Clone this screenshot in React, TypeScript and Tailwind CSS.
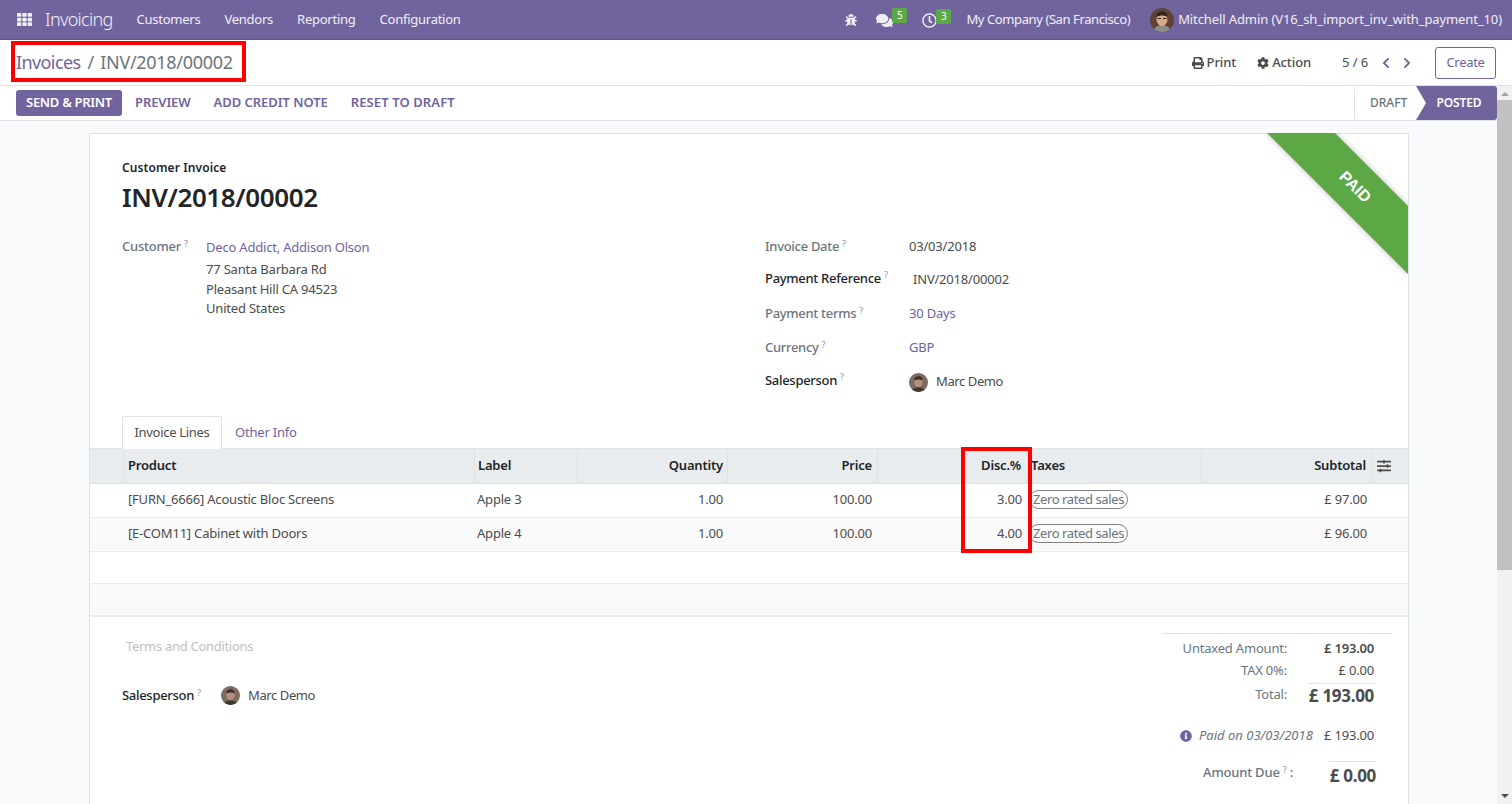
import { FaBug, FaChevronLeft, FaChevronRight, FaCog, FaComments, FaInfoCircle, FaPrint, FaRegClock, FaSlidersH, FaTh } from "react-icons/fa";

const gridCols = "grid grid-cols-[34px_350px_103px_150px_150px_150px_174px_170px_1fr]";

const navLinks = ["Customers", "Vendors", "Reporting", "Configuration"];

const lines = [
  { product: "[FURN_6666] Acoustic Bloc Screens", label: "Apple 3", disc: "3.00", subtotal: "£ 97.00", alt: false },
  { product: "[E-COM11] Cabinet with Doors", label: "Apple 4", disc: "4.00", subtotal: "£ 96.00", alt: true },
];

function Help() {
  return <sup className="ml-[3px] text-[9px] text-[#71639e]/70">?</sup>;
}

function MitchellAvatar() {
  return (
    <svg viewBox="0 0 24 24" className="size-6 rounded-full">
      <rect width="24" height="24" fill="#5e4436" />
      <path d="M3 24c1-5 5-7 9-7s8 2 9 7z" fill="#8d9088" />
      <ellipse cx="12" cy="11.500" rx="5.500" ry="6.500" fill="#d9a98a" />
      <path d="M6.500 9c0-4 3-5.500 5.500-5.500S17.500 5 17.500 9c-3-2-8-2-11 0z" fill="#2f221a" />
      <path d="M7.500 10.500h3.500M13 10.500h3.500" stroke="#2b211c" strokeWidth="1.200" />
    </svg>
  );
}

function MarcAvatar({ className }: { className: string }) {
  return (
    <svg viewBox="0 0 20 20" className={`${className} rounded-full`}>
      <rect width="20" height="20" fill="#7d6a60" />
      <path d="M3 20c1-4 4-5 7-5s6 1 7 5z" fill="#3f3733" />
      <ellipse cx="10" cy="9.500" rx="4.500" ry="5.500" fill="#b58f7a" />
      <path d="M5.500 8c0-3 2-4.500 4.500-4.500S14.500 5 14.500 8c-3-1.500-6-1.500-9 0z" fill="#3b2e28" />
    </svg>
  );
}

function Badge({ n, left }: { n: string; left: string }) {
  return (
    <span className={`absolute -top-[4px] ${left} flex h-[15px] w-[15px] items-center justify-center rounded-[2px] bg-[#5ba848] text-[10px] text-white`}>
      {n}
    </span>
  );
}

function Navbar() {
  return (
    <header className="flex h-10 shrink-0 items-center border-b border-[#5f5387] bg-[#71639e] text-[13px] text-white/90">
      <FaTh className="ml-[17px] size-[15px] text-white/90" />
      <span className="ml-[13px] text-[18px] font-light tracking-[-0.7px] text-white/90">Invoicing</span>
      <nav className="ml-[24px] flex gap-[24px]">
        {navLinks.map((l) => (
          <span key={l} className="tracking-[-0.25px]">
            {l}
          </span>
        ))}
      </nav>
      <div className="ml-auto flex items-center pr-[10px]">
        <FaBug className="size-[12px]" />
        <span className="relative ml-[19px] mt-[1px] w-[36px]">
          <FaComments className="size-[17px]" />
          <Badge n="5" left="left-[16px]" />
        </span>
        <span className="relative ml-[10px] mt-[1px] w-[44px]">
          <FaRegClock className="size-[15px]" />
          <Badge n="3" left="left-[14px]" />
        </span>
        <span className="tracking-[-0.4px]">My Company (San Francisco)</span>
        <span className="ml-[20px]">
          <MitchellAvatar />
        </span>
        <span className="ml-[4px] tracking-[-0.1px]">Mitchell Admin (V16_sh_import_inv_with_payment_10)</span>
      </div>
    </header>
  );
}

function ControlPanel() {
  return (
    <div className="flex h-[46px] shrink-0 items-center border-b border-[#dee2e6] bg-white pl-[16px] pr-[16px]">
      <span className="text-[18px] tracking-[-0.6px] text-[#71639e]">Invoices</span>
      <span className="ml-[7px] mr-[6px] text-[18px] text-[#6b7280]">/</span>
      <span className="text-[18px] tracking-[-0.3px] text-[#6c757d]">INV/2018/00002</span>
      <div className="ml-auto flex items-center text-[13px] text-[#4c4c4c]">
        <FaPrint className="size-[12px]" />
        <span className="ml-[3px] font-medium tracking-[-0.1px]">Print</span>
        <FaCog className="ml-[21px] size-[12px]" />
        <span className="ml-[3px] font-medium tracking-[-0.1px]">Action</span>
        <span className="ml-[31px] tracking-[-0.1px]">5 / 6</span>
        <FaChevronLeft className="ml-[12px] size-[12px] text-[#71639e]" />
        <FaChevronRight className="ml-[9px] size-[12px] text-[#71639e]" />
        <span className="ml-[22px] flex h-[32px] w-[61px] items-center justify-center rounded-[3px] border border-[#71639e] tracking-[-0.3px] text-[#71639e]">
          Create
        </span>
      </div>
    </div>
  );
}

function ActionBar() {
  return (
    <div className="flex h-[35px] shrink-0 items-center border-b border-[#dee2e6] bg-white pl-[16px] text-[13px] font-semibold tracking-[-0.1px] text-[#71639e]">
      <span className="flex h-[26px] w-[106px] items-center justify-center rounded-[3px] bg-[#71639e] tracking-[-0.3px] text-white">SEND &amp; PRINT</span>
      <span className="ml-[13px]">PREVIEW</span>
      <span className="ml-[23px] tracking-[-0.05px]">ADD CREDIT NOTE</span>
      <span className="ml-[23px] tracking-[0.1px]">RESET TO DRAFT</span>
      <div className="ml-auto flex h-full items-center self-stretch">
        <span className="flex h-full w-[62px] items-center rounded-l-[3px] border-l border-[#dee2e6] pl-[15px] text-[12px] font-medium tracking-normal text-[#6c757d]">DRAFT</span>
        <span className="flex h-full w-[81px] items-center justify-center rounded-r-[3px] bg-[#71639e] pl-[5px] text-[12px] font-semibold tracking-[-0.1px] text-white [clip-path:polygon(0_0,100%_0,100%_100%,0_100%,10px_50%)]">
          POSTED
        </span>
      </div>
    </div>
  );
}

function FieldRow({ label, strong, children, h }: { label: string; strong?: boolean; children: React.ReactNode; h: string }) {
  return (
    <div className={`flex items-center ${h}`}>
      <span className={`w-[144px] shrink-0 tracking-[-0.3px] ${strong ? "mb-[3px] font-medium text-[#212529]" : "font-medium text-[#6c757d]"}`}>
        {label}
        <Help />
      </span>
      {children}
    </div>
  );
}

function Ribbon() {
  return (
    <div className="absolute right-0 top-[-1px] size-[141px] overflow-hidden">
      <div className="absolute left-[-37.500px] top-[29.500px] flex h-[48px] w-[250px] rotate-45 items-center justify-center bg-[#5ca845] font-['Liberation_Sans',sans-serif] text-[16px] font-bold tracking-normal text-white shadow-[0_0_6px_rgba(0,0,0,0.25)]">
        PAID
      </div>
    </div>
  );
}

function InvoiceTable() {
  const head = "flex items-center border-l border-[#dee2e6] font-semibold text-[#212529]";
  return (
    <div>
      <div className={`${gridCols} h-[36px] border-y border-[#dee2e6] bg-[#e9ecef] text-[13px]`}>
        <div />
        <div className={`${head} pl-[3px]`}>Product</div>
        <div className={`${head} pl-[3px]`}>Label</div>
        <div className={`${head} justify-end pr-[4px]`}>Quantity</div>
        <div className={`${head} justify-end pr-[5px]`}>Price</div>
        <div className={`${head} justify-end pr-[6px]`}>Disc.%</div>
        <div className={`${head} pl-[3px]`}>Taxes</div>
        <div className={`${head} justify-end pr-[5px]`}>Subtotal</div>
        <div className={`${head} pl-[5px]`}>
          <FaSlidersH className="size-[14px] text-[#4c4c4c]" />
        </div>
      </div>
      {lines.map((l) => (
        <div key={l.label} className={`${gridCols} h-[34px] items-center border-b border-[#e9ecef] pb-[2px] text-[#4c4c4c] ${l.alt ? "bg-[#fafafa]" : "bg-white"}`}>
          <div />
          <div className="pl-[4px]">{l.product}</div>
          <div className="pl-[3px]">{l.label}</div>
          <div className="pr-[4px] text-right">1.00</div>
          <div className="pr-[5px] text-right">100.00</div>
          <div className="pr-[5px] text-right">{l.disc}</div>
          <div className="pl-[2px]">
            <span className="inline-flex h-[19px] items-center rounded-full border border-[#808080] px-[3px] text-[13px] tracking-[-0.4px] text-[#6c757d]">Zero rated sales</span>
          </div>
          <div className="pr-[4px] text-right">{l.subtotal}</div>
          <div />
        </div>
      ))}
      <div className="h-[32px] border-b border-[#e9ecef] bg-white" />
      <div className="h-[33px] border-b-2 border-[#e9ecef] bg-[#fafafa]" />
    </div>
  );
}

function Totals() {
  return (
    <div className="mr-[16px] mt-[16px] w-[229px] border-t border-[#dee2e6] text-[#4c4c4c]">
      <div className="flex h-[30px] items-center pr-[18px]">
        <span className="w-[124px] text-right text-[#6c757d]">Untaxed Amount:</span>
        <span className="ml-auto font-semibold">£ 193.00</span>
      </div>
      <div className="flex h-[14px] items-center pr-[18px]">
        <span className="w-[124px] text-right text-[#6c757d]">TAX 0%:</span>
        <span className="ml-auto">£ 0.00</span>
      </div>
      <div className="flex pr-[17px]">
        <span className="mt-[6px] w-[124px] text-right leading-[20px] text-[#6c757d]">Total:</span>
        <span className="ml-auto mt-[5px] w-[67px] border-t border-[#dee2e6] pt-[1px] pr-[1px] text-right text-[17px] font-bold leading-[22px] tracking-[-0.3px]">£ 193.00</span>
      </div>
      <div className="mt-[19px] flex h-[20px] items-center pr-[18px]">
        <FaInfoCircle className="ml-[17px] size-[12px] text-[#71639e]" />
        <span className="ml-[7px] italic tracking-normal text-[#6c757d]">Paid on 03/03/2018</span>
        <span className="ml-auto">£ 193.00</span>
      </div>
      <div className="mt-[15px] flex pr-[16px]">
        <span className="mt-[1px] w-[130px] whitespace-nowrap text-right font-medium leading-[20px] text-[#6c757d]">
          Amount Due
          <Help /> :
        </span>
        <span className="ml-auto w-[47px] border-t border-[#dee2e6] pt-[2px] text-right text-[17px] font-bold leading-[24px] tracking-[-0.3px]">£ 0.00</span>
      </div>
    </div>
  );
}

function Sheet() {
  return (
    <div className="relative ml-[89px] mt-[12px] w-[1320px] border border-[#dee2e6] bg-white text-[13px] tracking-[-0.2px] text-[#4c4c4c]">
      <Ribbon />
      <div className="pl-[32px] pt-[25px]">
        <div className="text-[12px] font-semibold leading-[18px] tracking-[0.1px] text-[#212529]">Customer Invoice</div>
        <h1 className="mt-[2px] text-[26px] font-semibold leading-[36px] tracking-[-0.4px] text-[#212529]">INV/2018/00002</h1>
        <div className="mt-[20px] flex h-[182px]">
          <div className="w-[643px]">
            <div className="flex">
              <span className="w-[84px] shrink-0 pt-[1px] font-medium leading-[20px] tracking-[-0.25px] text-[#6c757d]">
                Customer
                <Help />
              </span>
              <div>
                <div className="pt-[2px] leading-[20px] text-[#71639e]">Deco Addict, Addison Olson</div>
                <div className="mt-[3px] leading-[19.500px]">77 Santa Barbara Rd</div>
                <div className="leading-[19.500px]">Pleasant Hill CA 94523</div>
                <div className="leading-[19.500px]">United States</div>
              </div>
            </div>
          </div>
          <div className="-mt-[4px]">
            <FieldRow label="Invoice Date" h="h-[32px]">
              <span>03/03/2018</span>
            </FieldRow>
            <FieldRow label="Payment Reference" strong h="h-[34px]">
              <span className="ml-[4px]">INV/2018/00002</span>
            </FieldRow>
            <FieldRow label="Payment terms" h="h-[34px]">
              <span className="text-[#71639e]">30 Days</span>
            </FieldRow>
            <FieldRow label="Currency" h="h-[34px]">
              <span className="text-[#71639e]">GBP</span>
            </FieldRow>
            <FieldRow label="Salesperson" strong h="h-[34px]">
              <MarcAvatar className="size-[19px]" />
              <span className="ml-[8px] tracking-[-0.4px]">Marc Demo</span>
            </FieldRow>
          </div>
        </div>
      </div>
      <div className="-mb-px flex h-[32px] items-end pl-[32px]">
        <span className="relative z-10 flex h-[33px] w-[100px] items-center justify-center rounded-t-[3px] border border-b-0 border-[#dee2e6] bg-white tracking-[-0.3px]">Invoice Lines</span>
        <span className="flex h-[33px] items-center pl-[13px] text-[#71639e]">Other Info</span>
      </div>
      <InvoiceTable />
      <div className="flex h-[190px] justify-between pl-[32px]">
        <div>
          <div className="ml-[4px] mt-[20px] leading-[18px] tracking-[-0.3px] text-[#c0c0c0]">Terms and Conditions</div>
          <div className="mt-[31px] flex items-center">
            <span className="w-[99px] font-medium tracking-[-0.3px] text-[#212529]">
              Salesperson
              <Help />
            </span>
            <MarcAvatar className="size-[19px]" />
            <span className="ml-[8px] tracking-[-0.4px]">Marc Demo</span>
          </div>
        </div>
        <Totals />
      </div>
    </div>
  );
}

function Scrollbar() {
  return (
    <div className="flex w-[15px] shrink-0 flex-col items-center bg-[#f1f1f1]">
      <div className="mt-[6px] size-0 border-x-[4px] border-b-[4px] border-x-transparent border-b-[#a3a3a3]" />
      <div className="mt-[4px] h-[470px] w-full bg-[#c1c1c1]" />
      <div className="mb-[6px] mt-auto size-0 border-x-[4px] border-t-[4px] border-x-transparent border-t-[#505050]" />
    </div>
  );
}

export default function App() {
  return (
    <div className="relative flex h-screen flex-col overflow-hidden bg-[#f9fafb] font-['Noto_Sans',sans-serif]">
      <Navbar />
      <ControlPanel />
      <div className="flex min-h-0 flex-1">
        <main className="min-w-0 flex-1 overflow-hidden">
          <ActionBar />
          <Sheet />
        </main>
        <Scrollbar />
      </div>
      {/* red annotation boxes from the original screenshot */}
      <div className="absolute left-[11px] top-[41px] h-[41px] w-[235px] border-[4px] border-[#f00]" />
      <div className="absolute left-[961px] top-[447px] h-[106px] w-[71px] border-[4px] border-[#f00]" />
    </div>
  );
}
